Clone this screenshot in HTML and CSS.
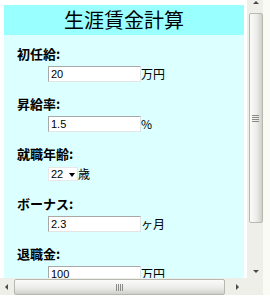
FILE: index.html
```html
<!DOCTYPE html>
<html lang="ja">
<head>
<meta charset="UTF-8" />
<title>生涯賃金計算</title>
<link rel="stylesheet" href="styles.css">
</head>
<body>
  <div class="frame">
    <div class="viewport">
      <div class="sheet">
        <h1>生涯賃金計算</h1>
        <dl class="fields">
          <dt>初任給:</dt>
          <dd><input type="text" value="20" /><span class="unit">万円</span></dd>

          <dt>昇給率:</dt>
          <dd><input type="text" value="1.5" /><span class="unit">%</span></dd>

          <dt>就職年齢:</dt>
          <dd class="short"><span class="select"><select><option>22</option></select></span><span class="unit">歳</span></dd>

          <dt>ボーナス:</dt>
          <dd><input type="text" value="2.3" /><span class="unit">ヶ月</span></dd>

          <dt>退職金:</dt>
          <dd><input type="text" value="100" /><span class="unit">万円</span></dd>
        </dl>
      </div>
    </div>

    <!-- fake classic scrollbars -->
    <div class="vbar">
      <div class="arrow up"></div>
      <div class="thumb v"><span class="grip"></span></div>
      <div class="arrow down"></div>
    </div>
    <div class="hbar">
      <div class="arrow left"></div>
      <div class="thumb h"><span class="grip"></span></div>
      <div class="arrow right"></div>
    </div>
    <div class="corner"></div>
  </div>
</body>
</html>
```

FILE: styles.css
```css
html, body {
  margin: 0;
  padding: 0;
}
body {
  background: #fff;
  width: 270px;
  height: 301px;
  overflow: hidden;
  font-family: "Noto Sans CJK JP", "Liberation Sans", sans-serif;
  color: #000;
}
.frame {
  display: grid;
  grid-template-columns: 247px 16px;
  grid-template-rows: 278px 17px;
  width: 263px;
  border-right: 7px solid #fbfbf6;
}
.viewport {
  overflow: hidden;
  padding: 5px 0 0 4px;
}
.sheet {
  width: 240px;
  height: 400px;
  background: #dcffff;
}
h1 {
  margin: 0;
  height: 30px;
  line-height: 30px;
  background: #99ffff;
  font-size: 20px;
  font-weight: normal;
  text-align: center;
}
.fields {
  margin: 0;
  padding: 11px 0 0 13px;
}
dt {
  font-size: 13px;
  font-weight: bold;
  line-height: 16px;
  height: 16px;
}
dd {
  margin: 4px 0 14px 31px;
  height: 16px;
  display: flex;
  align-items: center;
}
dd.short {
  margin-top: 5px;
  height: 14px;
  margin-bottom: 15px;
}
input {
  box-sizing: border-box;
  width: 93px;
  height: 16px;
  margin: 0;
  padding: 0 2px;
  border: 1px solid #a8a8a8;
  border-right-color: #e4e4e4;
  border-bottom-color: #e4e4e4;
  background: #fff;
  font-family: "Liberation Sans", sans-serif;
  font-size: 11px;
}
.unit {
  font-family: "Noto Sans CJK JP", sans-serif;
  font-size: 12px;
  line-height: 16px;
  white-space: nowrap;
}
.select {
  position: relative;
  display: block;
  width: 30px;
  height: 14px;
}
.select select {
  appearance: none;
  -webkit-appearance: none;
  display: block;
  box-sizing: border-box;
  width: 30px;
  height: 14px;
  margin: 0;
  padding: 0 0 0 2px;
  border: 1px solid #e8e8e8;
  border-radius: 0;
  background: #fff;
  color: #000;
  font-family: "Liberation Sans", sans-serif;
  font-size: 11px;
  line-height: 12px;
}
.select::after {
  content: "";
  position: absolute;
  right: 3px;
  top: 6px;
  border-left: 3px solid transparent;
  border-right: 3px solid transparent;
  border-top: 4px solid #000;
}

/* scrollbars */
.vbar, .hbar, .corner {
  background: #efefea;
}
.vbar {
  display: flex;
  flex-direction: column;
  align-items: center;
  padding-left: 1px;
}
.hbar {
  display: flex;
  align-items: center;
  padding-top: 1px;
}
.arrow {
  display: flex;
  align-items: center;
  justify-content: center;
}
.vbar .arrow {
  width: 15px;
}
.arrow.up {
  height: 12px;
  align-items: flex-start;
  padding-top: 1px;
}
.arrow.up::before {
  content: "";
  border-left: 3px solid transparent;
  border-right: 3px solid transparent;
  border-bottom: 3px solid #4a4a4a;
}
.arrow.down {
  margin-top: auto;
  height: 14px;
}
.arrow.down::before {
  content: "";
  border-left: 3px solid transparent;
  border-right: 3px solid transparent;
  border-top: 3px solid #4a4a4a;
}
.hbar .arrow {
  height: 16px;
}
.arrow.left {
  width: 12px;
}
.arrow.left::before {
  content: "";
  border-top: 3px solid transparent;
  border-bottom: 3px solid transparent;
  border-right: 3px solid #4a4a4a;
}
.arrow.right {
  margin-left: auto;
  width: 20px;
}
.arrow.right::before {
  content: "";
  border-top: 3px solid transparent;
  border-bottom: 3px solid transparent;
  border-left: 3px solid #4a4a4a;
}
.thumb {
  box-sizing: border-box;
  border: 1px solid #b8b8b0;
  border-radius: 2px;
  display: flex;
  align-items: center;
  justify-content: center;
}
.thumb.v {
  width: 14px;
  height: 210px;
  background: linear-gradient(to right, #fbfbf8, #ececea 55%, #cfcfca);
}
.thumb.h {
  width: 211px;
  height: 16px;
  margin-left: 2px;
  background: linear-gradient(to bottom, #fbfbf8, #ececea 55%, #cfcfca);
}
.thumb.v .grip {
  width: 7px;
  height: 7px;
  background: repeating-linear-gradient(to bottom, #8a8a86 0 1px, transparent 1px 2px);
}
.thumb.h .grip {
  width: 7px;
  height: 7px;
  background: repeating-linear-gradient(to right, #8a8a86 0 1px, transparent 1px 2px);
}
```
